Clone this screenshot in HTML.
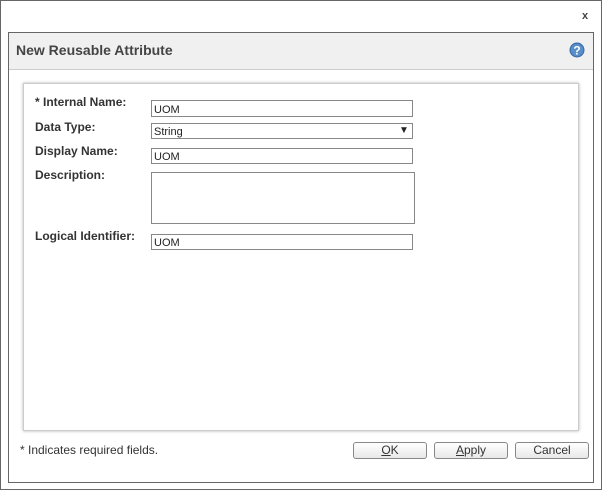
<!DOCTYPE html>
<html><head><style>
body{margin:0;width:602px;height:490px;background:#fff;font-family:"Liberation Sans",Arial,sans-serif;position:relative;overflow:hidden}
.abs{position:absolute}
.outer{left:0;top:0;width:600px;height:488px;border:1px solid #666}
.dlg{left:8px;top:32px;width:584px;height:449px;border:1px solid #666;background:#fff}
.hdr{left:9px;top:33px;width:584px;height:36px;background:#f0f0f0;border-bottom:1px solid #ccc}
.title{left:16px;top:42px;font-size:14px;font-weight:bold;color:#444}
.panel{left:23px;top:83px;width:554px;height:346px;border:1px solid #ccc;box-shadow:0 0 3px rgba(0,0,0,.3);background:#fff}
.lbl{font-size:12px;font-weight:bold;color:#333;left:35px}
.inp{left:151px;width:260px;border:1px solid #888;background:#fff;font-size:11px;color:#222;box-sizing:content-box}
.inp span{position:absolute;left:2px;top:3px}
.btn{top:442px;width:72px;height:15px;border:1px solid #888;border-radius:3px;background:linear-gradient(#fff,#e8e8e8);font-size:12px;color:#333;text-align:center;line-height:14px}
</style></head><body>
<div class="abs outer"></div>
<div class="abs" style="left:582px;top:10px;font-size:11px;color:#444;font-weight:bold">x</div>
<div class="abs dlg"></div>
<div class="abs hdr"></div>
<div class="abs title">New Reusable Attribute</div>
<svg class="abs" style="left:569px;top:42px" width="16" height="16" viewBox="0 0 16 16"><circle cx="8" cy="8" r="7.5" fill="#3a6ea8"/><circle cx="8" cy="8" r="6.3" fill="#5a8ec8"/><text x="8" y="12.5" font-size="12" font-weight="bold" fill="#fff" text-anchor="middle" font-family="Liberation Sans">?</text></svg>
<div class="abs panel"></div>
<div class="abs lbl" style="top:95px">* Internal Name:</div>
<div class="abs inp" style="top:100px;height:15px"><span>UOM</span></div>
<div class="abs lbl" style="top:120px">Data Type:</div>
<div class="abs inp" style="top:123px;height:14px"><span style="top:2px;font-size:11px">String</span><span style="left:247px;top:1px;font-size:10px">▼</span></div>
<div class="abs lbl" style="top:144px">Display Name:</div>
<div class="abs inp" style="top:148px;height:14px"><span style="top:2px">UOM</span></div>
<div class="abs lbl" style="top:168px">Description:</div>
<div class="abs inp" style="top:172px;height:50px;width:262px"></div>
<div class="abs lbl" style="top:229px">Logical Identifier:</div>
<div class="abs inp" style="top:234px;height:14px"><span style="top:2px">UOM</span></div>
<div class="abs" style="left:20px;top:443px;font-size:12px;color:#333">* Indicates required fields.</div>
<div class="abs btn" style="left:353px"><u>O</u>K</div>
<div class="abs btn" style="left:434px"><u>A</u>pply</div>
<div class="abs btn" style="left:515px">Cancel</div>
</body></html>
